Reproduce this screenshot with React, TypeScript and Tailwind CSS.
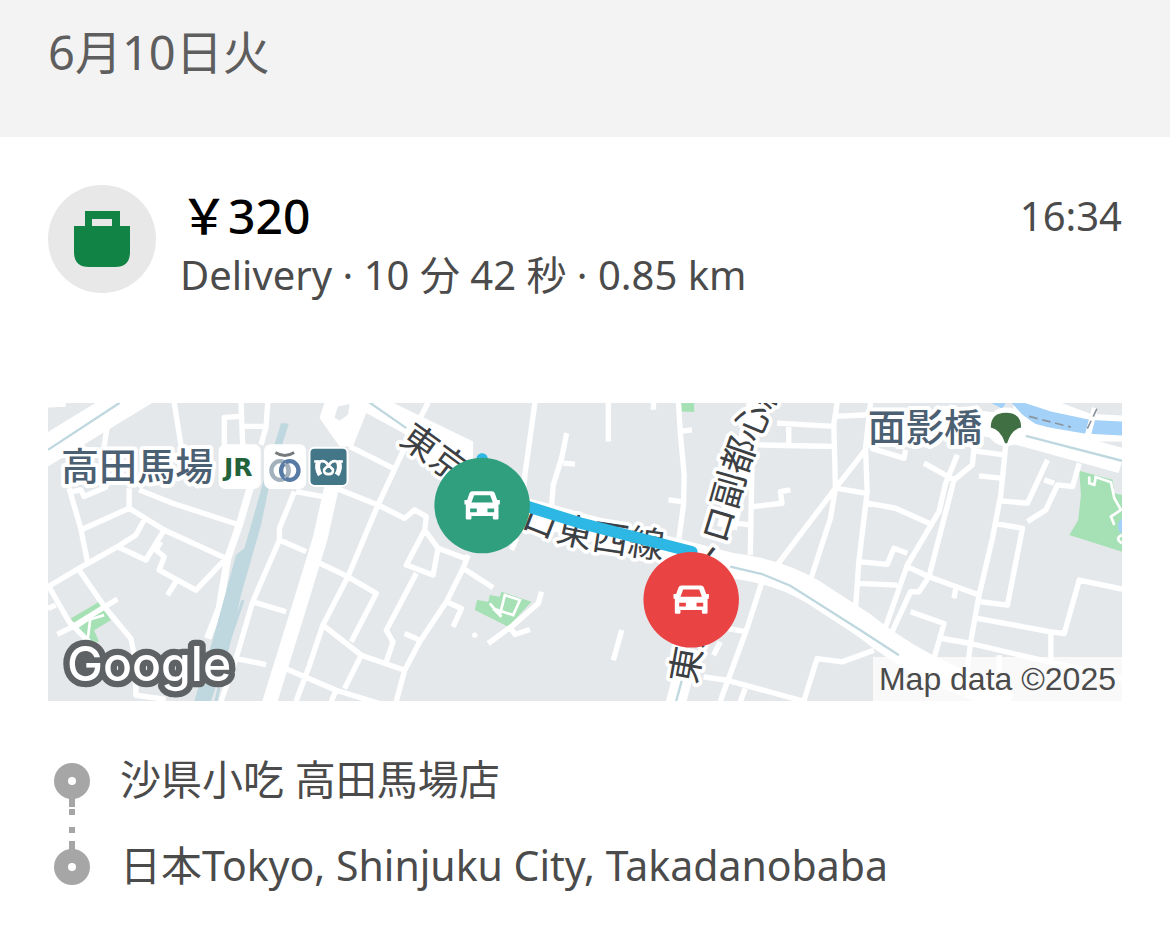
import type { ReactNode } from "react"

const MINOR_ROADS = [
  // west
  "M27 30L80 28M205 90L195 155M405 24L425 150M605 24L610 150M555 150V68L605 65M605 95H680M685 24L680 95L665 150",
  "M90 280L125 400L145 500M27 575L120 520L235 455L290 420L315 375M125 405L270 340M270 280V340L375 405L560 490",
  "M300 285L400 325L600 390M100 290L125 285L135 305L205 275M235 455L320 495L375 405M365 440L350 465L375 485L360 525L470 585L560 490M410 560L385 600",
  "M120 525L200 640L275 730L290 800V900L380 912M30 575L90 680L150 740M55 718L100 695L235 612M27 640L50 630",
  "M765 290L720 400V435L640 620L590 790L545 918M720 435L800 470M640 620L740 650M590 790L680 808M770 290L850 305M715 810L890 885L1020 925M820 495L925 545",
  // station area to the first pin
  "M930 155L1060 220M1165 24L1085 180L1015 330L925 545L850 690L810 810L770 918",
  "M890 280L1015 330L1095 370L1125 345L1160 365L1155 405L1195 460L1275 490M1155 405L1100 510L1180 540L1195 460",
  "M1130 535L1040 705L1060 740L1040 800M925 545L1010 595L935 740M850 690L965 780L1095 825M965 780L915 880M890 885L875 918",
  "M1285 480L1270 520L1220 620L1140 740L1095 825L1070 918M1270 520L1360 578M1220 620L1265 640L1240 695M1095 715L1140 735",
  "M1485 24L1455 240L1450 300M1580 115L1565 190L1540 270L1535 330M1570 205L1605 208M1430 430L1415 465",
  "M1505 590L1495 625L1420 690L1345 745M1410 695L1425 718L1470 703",
  // middle
  "M1705 24V140M1840 24V45M1915 24L1920 110L1932 240L1930 330L1915 440M1920 110L1955 105M1885 315L1925 320M1745 705L1720 795",
  "M2210 85L2380 95M2245 90V150M2140 150L2385 155M2390 24L2380 90L2385 280L2370 370L2310 555M2380 65L2490 60",
  "M2475 165L2385 280L2210 510M2385 280L2475 295M2135 160V200L2130 480M2140 335L2225 325L2220 290L2250 285M2090 385L2130 390",
  "M2165 560L2120 700L2040 918M2060 700L2120 710M2020 780L2040 740M1990 845L2060 855L2290 918M2115 880L2100 918M2290 918L2330 790L2405 800L2500 765",
  // east
  "M2490 24L2475 160L2480 290L2455 500L2445 640M2490 160L2590 190L2595 165M2650 205L2740 255M2800 160L2795 210L2740 255L2665 545L2635 590H2610L2550 720",
  "M2750 180L2715 265L2695 350L2600 510L2530 710M2480 325L2565 340L2665 385M2455 500L2540 508L2560 460L2600 475M2455 565L2570 570",
  "M2600 515L2665 545L2815 600M2745 580L2740 610M2800 168L2890 180M2895 150L2880 300L2855 430L2815 600L2790 740L2780 820",
  "M2815 243L2880 250M2880 318L2960 325L3020 195M3010 255L3040 265M3115 205L3095 275L3050 270L3015 345L2960 380M2860 385L2945 400L2900 630L2820 620",
  "M2810 670L3030 710L3070 715L3115 555L3243 582M3030 710V800M2610 650L2710 685L2680 790M2705 730L2790 745L2960 785L3243 850M2875 780V830",
].join("")

const CarPin = ({ x, y, color }: { x: number; y: number; color: string }) => (
  <g transform={`translate(${x} ${y})`}>
    <circle r="143" fill={color} />
    <path
      fill="#fff"
      fillRule="evenodd"
      d="M-29 -43H29Q36 -43 38 -37L45 -17H53V-3H49V38Q49 42 45 42H36Q32 42 32 38V31H-32V38Q-32 42 -36 42H-45Q-49 42 -49 38V-3H-53V-17H-45L-38 -37Q-36 -43 -29 -43ZM-24 -31L-32 -9H32L24 -31ZM-36 9V20H-16V9ZM16 9V20H36V9Z"
    />
  </g>
)

const StationBox = ({ x, children }: { x: number; children: ReactNode }) => (
  <g transform={`translate(${x} 148)`}>
    <rect width="126" height="134" rx="20" fill="#fff" />
    {children}
  </g>
)

const RouteMap = () => (
  <svg
    viewBox="27 24 3216 894"
    preserveAspectRatio="xMidYMid slice"
    className="block h-[298px] w-full bg-[#e5e8eb]"
    role="img"
    aria-label="Trip route"
  >
    <defs>
      <path id="tozai" d="M1098 112C1200 180 1330 290 1450 355S1700 425 1990 470" />
      <path id="fukutoshin" d="M1928 862C1955 700 2000 500 2035 385S2090 150 2215 -90" />
    </defs>

    {/* parks and river */}
    <g fill="#a6e1b5">
      <path d="M95 670L180 620L215 675L165 705L180 740H150Z" />
      <path d="M1312 615L1345 620L1350 600L1380 605L1385 590L1475 620L1405 695L1305 645Z" />
      <path d="M1920 24H1962V52L1920 50Z" />
      <path d="M3115 228L3215 255L3220 295L3243 300V470L3085 420L3112 375L3120 300Z" />
    </g>
    <path fill="#fff" d="M2920 24H3060L3150 58L3243 62V140H2900Z" />
    <path fill="#a3d1f8" d="M2850 24H2895L2885 42ZM2912 24H2950L3030 50L3150 76L3243 80V122L3130 116L2990 92L2945 60Z" />
    <path fill="#a3d1f8" d="M3243 370Q3225 385 3235 410L3243 415Z" />
    <path stroke="#fff" strokeWidth="18" d="M3162 40L3140 125" />
    <path stroke="#8b949c" strokeWidth="5" strokeDasharray="26 14" fill="none" d="M2965 65L3090 97M3168 42L3135 110" />

    {/* railway */}
    <path fill="none" stroke="#fff" strokeWidth="22" d="M632 280L600 390L565 490L540 640L505 730" />
    <path fill="#bfd8df" d="M725 85L748 87L690 270L665 390L605 600L575 735L515 918H465L520 735L590 480L615 460L655 320L680 230Z" />
    <path fill="none" stroke="#bfd8df" strokeWidth="9" d="M611 615L570 735L530 918" />

    {/* streets */}
    <path fill="none" stroke="#fff" strokeWidth="16" strokeLinejoin="round" d={MINOR_ROADS} />
    <g fill="none" stroke="#fff" strokeWidth="8">
      <path d="M115 695L145 675L195 660M145 740L155 660L190 635M1350 625L1380 660L1395 600L1440 615L1420 660L1360 640L1385 665" />
      <path d="M3145 245V265L3160 270L3165 245M3160 245L3210 262L3220 310L3240 345L3210 365L3220 390M3243 420Q3220 430 3243 445" />
    </g>
    <circle cx="1305" cy="720" r="8" fill="#fff" />
    <path fill="none" stroke="#fff" strokeWidth="44" d="M878 270L842 430L790 600L688 930" />
    <path fill="#fff" d="M27 112L170 24H340L27 215Z" />
    <path fill="#fff" fillRule="evenodd" d="M855 24L840 70L900 155H940L980 55L1090 115L1180 210L1300 250V140L1060 24ZM895 35L930 28L925 60L900 78L885 68Z" />
    <g fill="none" stroke="#fff">
      <path strokeWidth="76" d="M1450 345L1800 440L2075 512Q2220 530 2320 592L2470 690Q2640 825 2840 890L2900 930" />
      <path strokeWidth="76" d="M2700 70L2850 90L3243 198" />
      <path strokeWidth="60" d="M2150 24L2060 400M1950 760L1905 930" />
    </g>
    <g fill="none" stroke="#bfd8df" strokeWidth="7">
      <path d="M27 165L242 24M985 20L1100 100M2070 515L2165 537L2250 572L2460 705L2575 780M2955 123L3243 198" />
      <path d="M1925 855L1908 918" />
    </g>

    {/* line names */}
    <g
      fill="#3c4043"
      stroke="#fff"
      strokeWidth="22"
      strokeLinejoin="round"
      className="font-['Noto_Sans_CJK_JP',sans-serif] text-[108px] [paint-order:stroke]"
    >
      <text dy="40"><textPath href="#tozai">東京メトロ東西線</textPath></text>
      <text dy="40"><textPath href="#fukutoshin">東京メトロ副都心線</textPath></text>
    </g>

    {/* stations */}
    <g
      fill="#4b6072"
      stroke="#fff"
      strokeWidth="24"
      strokeLinejoin="round"
      className="font-['Noto_Sans_CJK_JP',sans-serif] text-[114px] font-medium [paint-order:stroke]"
    >
      <text x="66" y="254">高田馬場</text>
      <text x="2482" y="140">面影橋</text>
    </g>
    <StationBox x={538}>
      <text x="16" y="94" fill="#23633c" className="font-['DejaVu_Sans',sans-serif] text-[75px] font-bold">JR</text>
    </StationBox>
    <StationBox x={674}>
      <g fill="none">
        <path stroke="#777a7c" strokeWidth="9" d="M34 25Q62 43 90 25" />
        <ellipse cx="48" cy="79" rx="26" ry="28" stroke="#a3b1bd" strokeWidth="13" />
        <ellipse cx="77" cy="79" rx="26" ry="28" stroke="#587ba6" strokeWidth="13" />
        <path stroke="#a3b1bd" strokeWidth="6" d="M62 56Q78 79 62 102" />
      </g>
    </StationBox>
    <rect x="807" y="156" width="120" height="120" rx="18" fill="#fff" />
    <rect x="813" y="162" width="108" height="108" rx="12" fill="#437687" />
    <g fill="none" stroke="#fff" strokeLinejoin="round">
      <path strokeWidth="15" d="M842 240Q829 218 838 199M892 240Q905 218 896 199" />
      <path strokeWidth="8" d="M842 200Q856 196 864 208L880 224Q882 238 867 238Q852 238 854 224L870 208Q878 196 892 200M824 200H842M892 200H910" />
    </g>
    <circle cx="2896" cy="96" r="58" fill="#fff" />
    <path fill="#3f6f43" d="M2850 98Q2850 54 2895 54Q2941 54 2941 98Q2912 104 2899 145H2893Q2880 104 2850 98Z" />

    {/* route */}
    <path
      fill="none"
      stroke="#2cb7e5"
      strokeWidth="34"
      strokeLinecap="round"
      strokeLinejoin="round"
      d="M1327 192L1350 290L1470 337L1620 384L1955 470"
    />
    <CarPin x={1327} y={332} color="#309f7d" />
    <CarPin x={1953} y={614} color="#ea4343" />

    <text
      x="84"
      y="856"
      fill="#fff"
      stroke="#5f6264"
      strokeWidth="38"
      strokeLinejoin="round"
      className="font-[Inter,sans-serif] text-[144px] font-medium [paint-order:stroke]"
    >
      Google
    </text>
  </svg>
)

const BagIcon = () => (
  <svg viewBox="0 0 56 56" className="size-14" aria-hidden>
    <path fill="#118445" fillRule="evenodd" d="M11 0H46V15H56V41Q56 56 41 56H15Q0 56 0 41V15H11ZM18 8V15H38V8Z" />
  </svg>
)

const StopsLine = () => (
  <svg viewBox="0 0 36 122" className="h-[122px] w-9 shrink-0" fill="#a6a6a6" aria-hidden>
    <path d="M15 34H21V44H15ZM15 46H21V52H15ZM15 64H21V70H15ZM15 78H21V88H15Z" />
    <circle cx="18" cy="18" r="18" />
    <circle cx="18" cy="104" r="18" />
    <circle cx="18" cy="18" r="4" fill="#fff" />
    <circle cx="18" cy="104" r="4" fill="#fff" />
  </svg>
)

const stops = ["沙県小吃 高田馬場店", "日本Tokyo, Shinjuku City, Takadanobaba"]

export default function App() {
  return (
    <main className="min-h-screen bg-white font-['Noto_Sans','Noto_Sans_CJK_JP',sans-serif] text-[#4b4b4b]">
      <header className="bg-[#f3f3f3] px-12 pt-6 pb-[57px]">
        <h1 className="text-[47px] leading-14 text-[#5e5e5e]">6月10日火</h1>
      </header>

      <article className="px-12 pt-12">
        <section className="flex items-start">
          <div className="flex size-[108px] shrink-0 items-center justify-center rounded-full bg-[#e8e8e8]">
            <BagIcon />
          </div>
          <div className="ml-6 grow">
            <h2 className="text-5xl leading-[62px] font-medium text-black">￥320</h2>
            <p className="text-[40px] leading-14">Delivery · 10 分 42 秒 · 0.85 km</p>
          </div>
          <time className="text-[40px] leading-[62px]">16:34</time>
        </section>

        <div className="relative mt-[100px]">
          <RouteMap />
          <p className="absolute right-0 bottom-0 bg-white/75 px-1.5 font-['Liberation_Sans',sans-serif] text-[32px] leading-11 text-[#4b4b4b]">
            Map data ©2025
          </p>
        </div>

        <section className="mt-[50px] flex items-center pl-1.5">
          <StopsLine />
          <ul className="ml-[30px] flex flex-col gap-[30px] pb-1 text-[41px] leading-14">
            {stops.map((stop) => (
              <li key={stop}>{stop}</li>
            ))}
          </ul>
        </section>
      </article>
    </main>
  )
}
